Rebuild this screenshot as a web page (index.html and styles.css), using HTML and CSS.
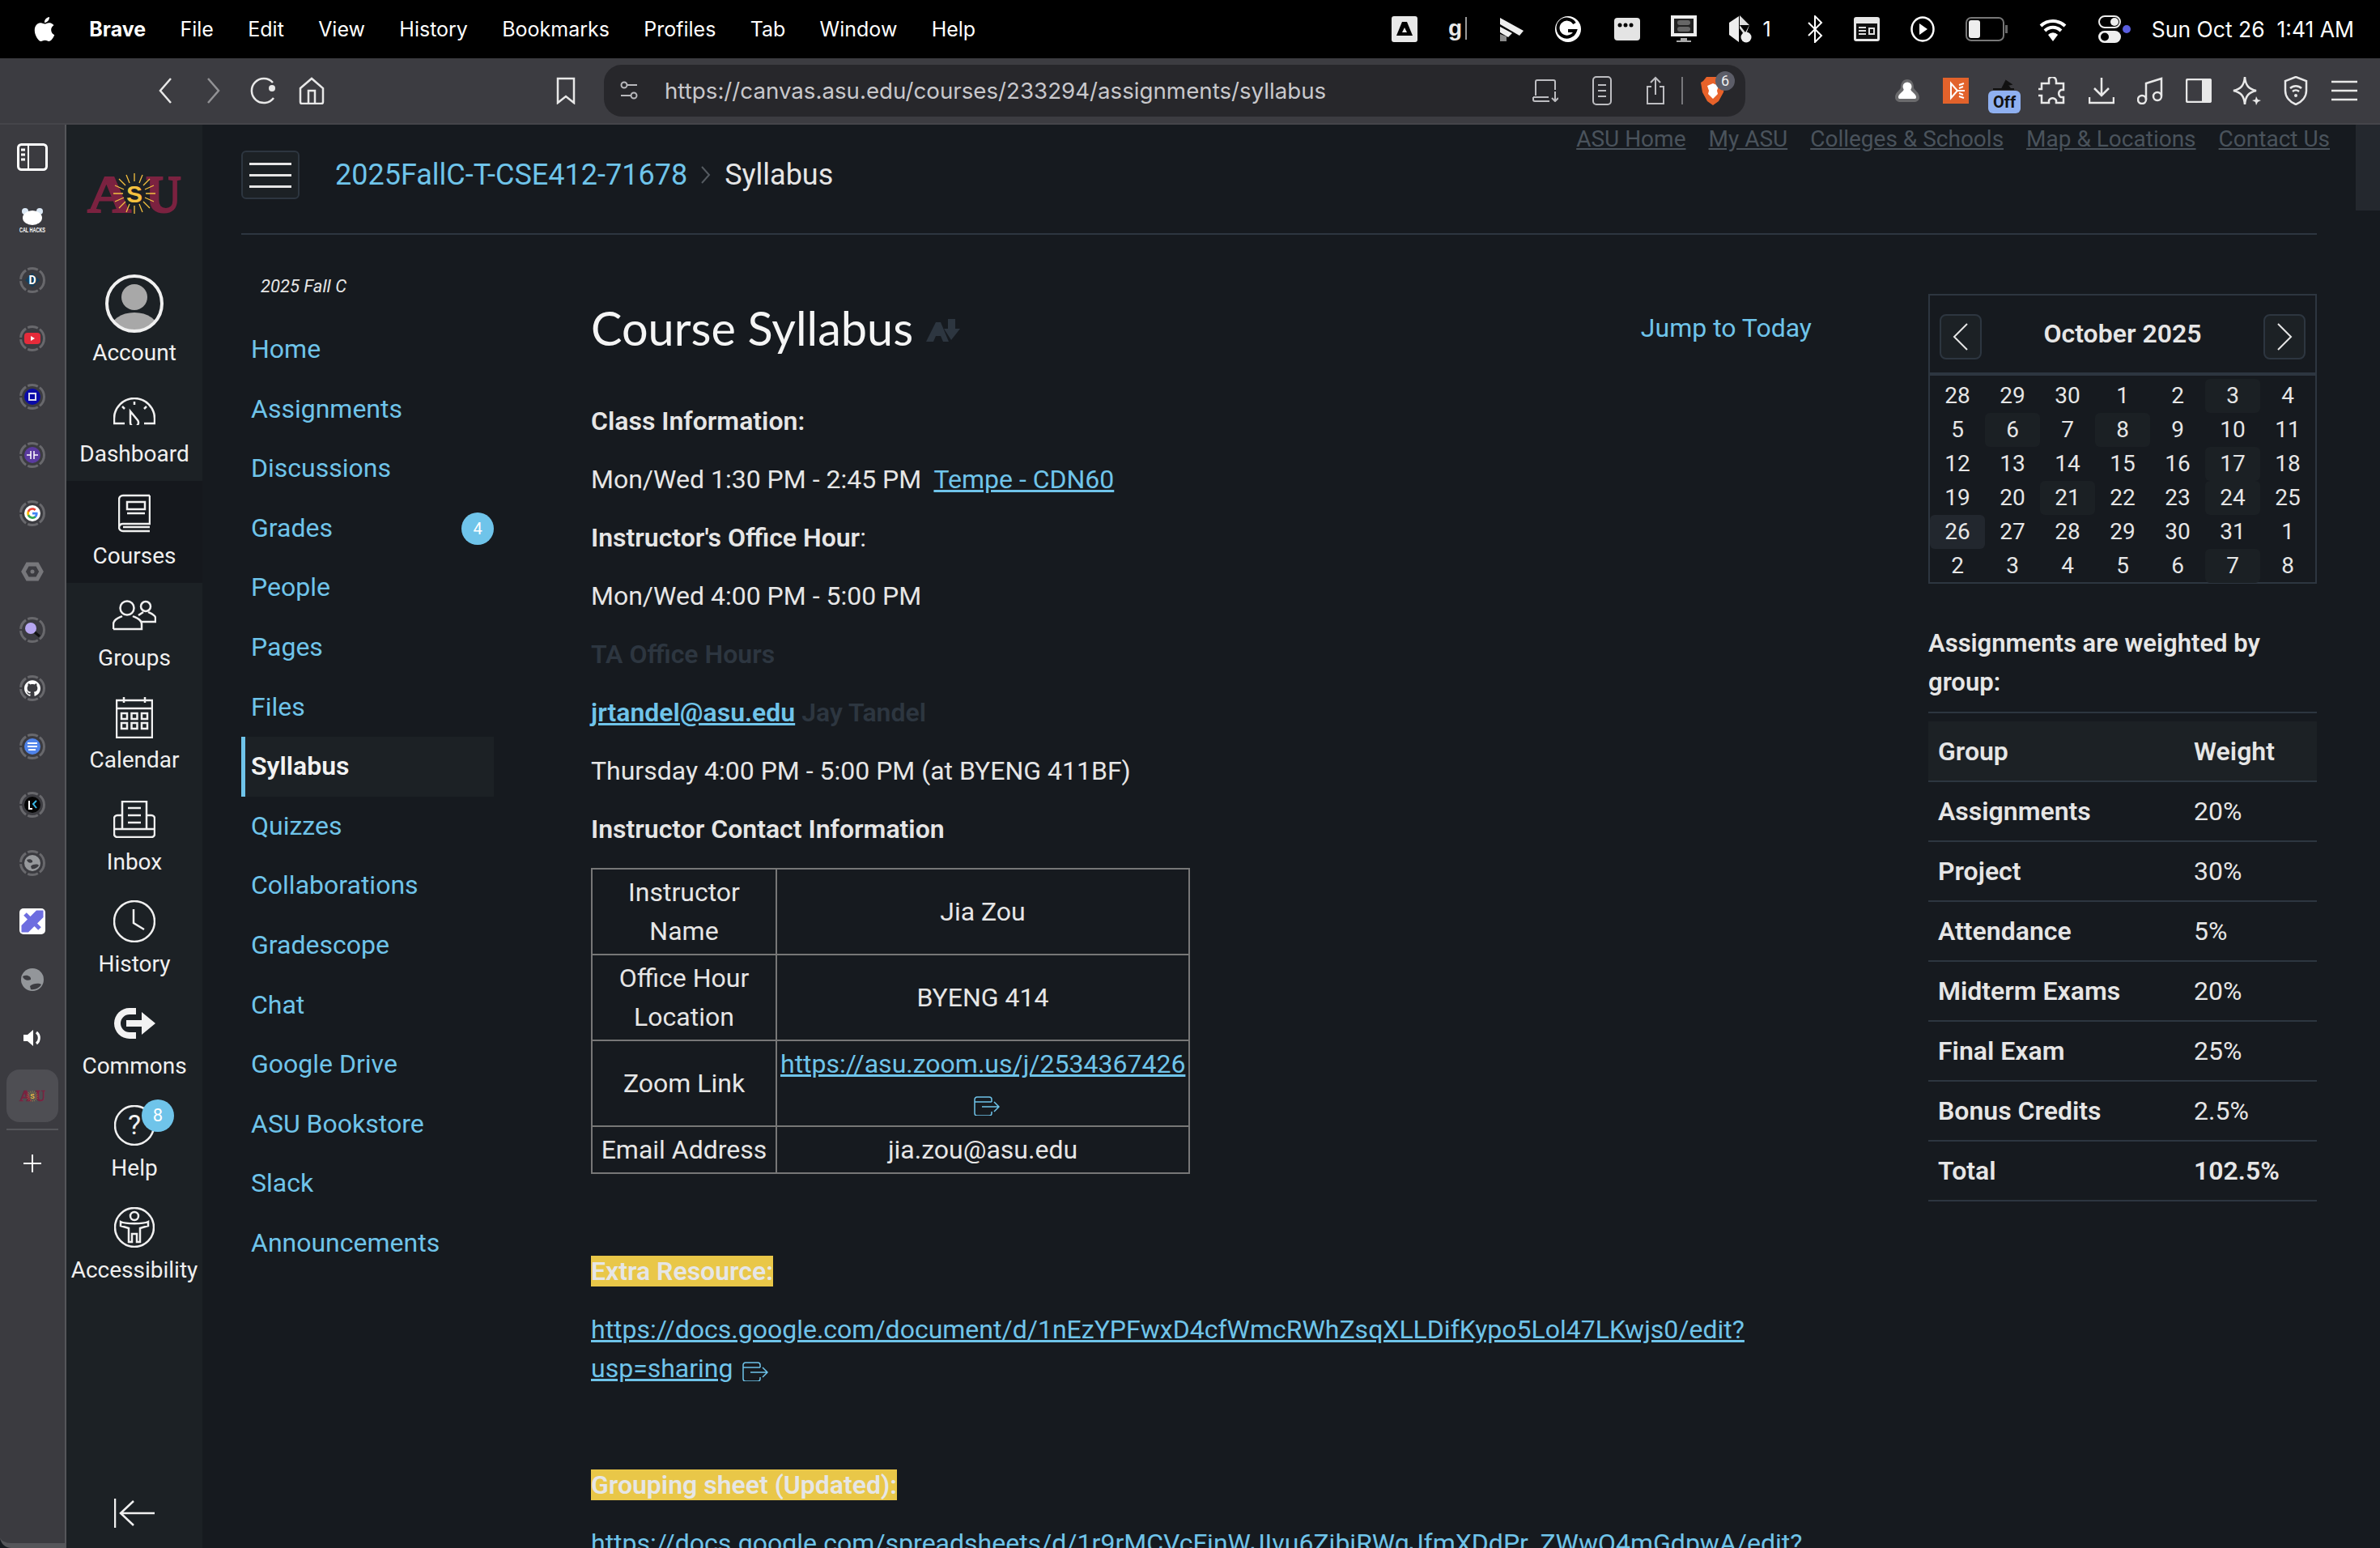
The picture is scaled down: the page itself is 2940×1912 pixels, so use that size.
FILE: index.html
```html
<!DOCTYPE html>
<html lang="en">
<head>
    <meta charset="UTF-8">
    <meta name="viewport" content="width=device-width, initial-scale=1.0">
    <title>Course Syllabus</title>
    <link rel="stylesheet" href="styles.css">
</head>
<body>
    <svg class="defs" width="0" height="0">
        <symbol id="ring" viewBox="0 0 32 32"><circle cx="16" cy="16" r="14.5" fill="none" stroke="#68686c" stroke-width="3" stroke-dasharray="13 2.5"/></symbol>
        <symbol id="ext" viewBox="0 0 32 24"><path d="M22 7V4a3 3 0 0 0-3-3H4a3 3 0 0 0-3 3v17a3 3 0 0 0 3 3h15a3 3 0 0 0 3-3v-2M1 7h21M10 13h21M25 7l6 6-6 6" fill="none" stroke="currentColor" stroke-width="1.500"/></symbol>
        <symbol id="sunrays" viewBox="0 0 116 50">
            <path d="M58 0v10M58 40v10M32 25h12M72 25h12M39 7l8 8M69 35l8 8M39 43l8-8M69 15l8-8M48 2l4 10M64 38l4 10M48 48l4-10M64 12l4-10M34 15l11 5M71 30l11 5M34 35l11-5M71 20l11-5" stroke="#f5c13f" stroke-width="1.300"/>
        </symbol>
    </svg>

    <header class="menubar">
        <div class="menu-left">
            <svg class="apple" width="30" height="34" viewBox="0 0 24 24" fill="#fff"><path d="M12.152 6.896c-.948 0-2.415-1.078-3.96-1.04-2.04.027-3.91 1.183-4.961 3.014-2.117 3.675-.546 9.103 1.519 12.09 1.013 1.454 2.208 3.09 3.792 3.039 1.52-.065 2.09-.987 3.935-.987 1.831 0 2.35.987 3.96.948 1.637-.026 2.676-1.48 3.676-2.948 1.156-1.688 1.636-3.325 1.662-3.415-.039-.013-3.182-1.221-3.22-4.857-.026-3.04 2.48-4.494 2.597-4.559-1.429-2.09-3.623-2.324-4.39-2.376-2-.156-3.675 1.09-4.61 1.09zM15.53 3.83c.843-1.012 1.4-2.427 1.245-3.83-1.207.052-2.662.805-3.532 1.818-.78.896-1.454 2.338-1.273 3.714 1.338.104 2.715-.688 3.559-1.701"/></svg>
            <b>Brave</b>
            <span>File</span>
            <span>Edit</span>
            <span>View</span>
            <span>History</span>
            <span>Bookmarks</span>
            <span>Profiles</span>
            <span>Tab</span>
            <span>Window</span>
            <span>Help</span>
        </div>
        <div class="menu-right">
            <svg width="32" height="32" viewBox="0 0 32 32"><rect width="32" height="32" rx="3" fill="#e8e8e8"/><path d="M13 7h6l7 17H6z" fill="#000"/><path d="M16 14l3 6h-6z" fill="#e8e8e8"/></svg>
            <svg width="24" height="32" viewBox="0 0 24 32"><text x="0" y="24" class="menu-g">g</text><path d="M22 1v28" stroke="#999" stroke-width="2"/></svg>
            <svg width="32" height="32" viewBox="0 0 32 32"><path d="M2 2l29 16-5 6L2 10z" fill="#eee"/><path d="M2 13l15 8-5 5-10-6z" fill="#eee"/><path d="M2 22l8 3v6H2z" fill="#8a8a8a"/></svg>
            <svg class="menu-wide" width="32" height="32" viewBox="0 0 32 32"><circle cx="16" cy="16" r="16" fill="#fff"/><path d="M24 9a11 11 0 1 0 1 9h-9" fill="none" stroke="#000" stroke-width="4"/></svg>
            <svg width="32" height="28" viewBox="0 0 32 28"><rect width="32" height="28" rx="4" fill="#e4e4e4"/><circle cx="7" cy="9" r="2.5"/><circle cx="14" cy="9" r="2.5"/><circle cx="21" cy="9" r="2.5"/></svg>
            <svg width="32" height="34" viewBox="0 0 32 34"><rect width="32" height="26" fill="#eee"/><rect x="4" y="4" width="24" height="18" fill="#222"/><rect x="8" y="6" width="16" height="6" rx="3" fill="#666"/><rect x="8" y="14" width="16" height="6" rx="3" fill="#666"/><path d="M12 28h8v3h5v2H7v-2h5z" fill="#aaa"/></svg>
            <svg width="30" height="34" viewBox="0 0 30 34"><path d="M15 0l12 12-5 14-7-10z" fill="#ddd"/><path d="M2 9l12-8v32L2 24z" fill="#eee"/><path d="M15 12h12l-5 9z" fill="#000"/><circle cx="23" cy="27" r="6.5" fill="#eee"/></svg>
            <span class="menu-count">1</span>
            <svg class="bt" width="20" height="34" viewBox="0 0 20 34"><path d="M2 9l16 16-8 8V1l8 8L2 25" fill="none" stroke="#fff" stroke-width="2"/></svg>
            <svg width="32" height="30" viewBox="0 0 32 30"><rect width="32" height="30" rx="3" fill="#e6e6e6"/><rect x="3" y="8" width="26" height="19" fill="#111"/><path d="M6 13h9M6 17h9M6 21h9M19 14h6v7h-6z" stroke="#ddd" stroke-width="2" fill="none"/></svg>
            <svg width="30" height="32" viewBox="0 0 30 32"><ellipse cx="15" cy="16" rx="13.5" ry="14.5" fill="none" stroke="#fff" stroke-width="2.5"/><path d="M11 9l10 7-10 7z" fill="#fff"/></svg>
            <svg width="52" height="30" viewBox="0 0 52 30"><rect x="1" y="1" width="46" height="28" rx="6" fill="none" stroke="#777" stroke-width="2"/><rect x="4" y="4" width="14" height="22" rx="3" fill="#eee"/><rect x="49" y="10" width="3" height="10" fill="#666"/></svg>
            <svg width="36" height="30" viewBox="0 0 36 30"><path d="M3 11a22 22 0 0 1 30 0M8 17a14 14 0 0 1 20 0" fill="none" stroke="#fff" stroke-width="4"/><path d="M18 30l-6-8a8 8 0 0 1 12 0z" fill="#fff"/></svg>
            <svg width="40" height="34" viewBox="0 0 40 34"><rect x="1" y="1" width="26" height="14" rx="7" fill="none" stroke="#eee" stroke-width="2"/><circle cx="20" cy="8" r="5" fill="#eee"/><rect y="19" width="28" height="15" rx="7.5" fill="#eee"/><circle cx="8" cy="26.500" r="5" fill="#000"/><circle cx="35" cy="17" r="5" fill="#5a5ee0"/></svg>
            <span class="menu-date">Sun Oct 26&nbsp; 1:41 AM</span>
        </div>
    </header>

    <div class="toolbar">
        <svg class="tb-back" width="18" height="34" viewBox="0 0 18 34"><path d="M16 2L3 17l13 15" class="ln"/></svg>
        <svg class="tb-fwd" width="18" height="34" viewBox="0 0 18 34"><path d="M2 2l13 15L2 32" class="ln"/></svg>
        <svg class="tb-reload" width="34" height="34" viewBox="0 0 34 34"><path d="M29 7a15 15 0 1 0 1 19" class="ln"/><circle cx="28" cy="14" r="4" fill="#e8e8e8"/></svg>
        <svg class="tb-home" width="32" height="34" viewBox="0 0 32 34"><path d="M2 14L16 2l14 12v17a2 2 0 0 1-2 2H4a2 2 0 0 1-2-2zM12 33V17h8v16" class="ln"/></svg>
        <svg class="tb-mark" width="24" height="34" viewBox="0 0 24 34"><path d="M2 2h20v30l-10-8-10 8z" class="ln"/></svg>
        <div class="urlbar">
            <svg width="24" height="24" viewBox="0 0 24 24"><path d="M10 5h12M2 18h12" stroke="#b8b8bc" stroke-width="2"/><circle cx="6" cy="5" r="3.500" fill="none" stroke="#b8b8bc" stroke-width="2"/><circle cx="18" cy="18" r="3.500" fill="none" stroke="#b8b8bc" stroke-width="2"/></svg>
            <span class="url-text">https://canvas.asu.edu/courses/233294/assignments/syllabus</span>
            <div class="url-tools">
                <svg width="32" height="28" viewBox="0 0 32 28"><path d="M4 20V3a2 2 0 0 1 2-2h20a2 2 0 0 1 2 2v10M1 22v3a2 2 0 0 0 2 2h18M1 22h19M28 15v12M24 23l4 4 4-4" fill="none" stroke="#bdbdc1" stroke-width="2"/></svg>
                <svg width="24" height="36" viewBox="0 0 24 36"><rect x="1" y="1" width="22" height="34" rx="4" fill="none" stroke="#bdbdc1" stroke-width="2"/><path d="M7 11h10M7 18h10M7 25h10" stroke="#bdbdc1" stroke-width="2"/></svg>
                <svg width="24" height="36" viewBox="0 0 24 36"><path d="M7 13H2v21h20V13h-5M12 23V2M6 8l6-6 6 6" fill="none" stroke="#bdbdc1" stroke-width="2"/></svg>
                <i class="url-sep"></i>
                <div class="brave-btn">
                    <svg width="30" height="36" viewBox="0 0 30 36"><path d="M7 1h16l4 5 3 2-2 12-6 11-7 5-7-5-6-11L0 8l3-2z" fill="#e8622a"/><path d="M8 12l7-3 7 3-2 6 1 4-6 6-6-6 1-4z" fill="#fff"/></svg>
                    <span class="brave-badge">6</span>
                </div>
            </div>
        </div>
        <div class="ext-tools">
            <span class="ext-slot"><svg width="32" height="30" viewBox="0 0 32 30"><path d="M16 1c5 0 8 4 8 10 0 3 7 6 7 12 0 4-3 6-7 6H8c-4 0-7-2-7-6 0-6 7-9 7-12C8 5 11 1 16 1z" fill="#6a6a6c"/><circle cx="16" cy="10" r="5.500" fill="#fff"/><path d="M12 12h8c0 5 7 6 7 11 0 2-1 2-3 2H8c-2 0-3 0-3-2 0-5 7-6 7-11z" fill="#fff"/></svg></span>
            <span class="ext-slot"><svg width="32" height="32" viewBox="0 0 32 32"><rect width="32" height="32" fill="#e2622b"/><path d="M10 7v18l8-9zM18 16h9M20 9l6-2M20 23l6 2M20 13l5-2M20 19l5 2" fill="none" stroke="#fff" stroke-width="2"/></svg></span>
            <span class="ext-slot ext-off"><svg width="28" height="14" viewBox="0 0 28 14"><path d="M0 12h26M12 10l4-8 6 4-4 1 2 3z" stroke="#111" stroke-width="2" fill="#111"/></svg><b>Off</b></span>
            <span class="ext-slot"><svg width="36" height="34" viewBox="0 0 36 34"><path d="M13 2a5 5 0 0 1 9 3v3h9v8h-3a5 5 0 0 0 0 9h3v7H22v-3a5 5 0 0 0-9 0v3H4v-9H1a4 4 0 0 1 0-8h3V8h9z" class="ln"/></svg></span>
            <span class="ext-slot"><svg width="32" height="34" viewBox="0 0 32 34"><path d="M16 1v22M7 14l9 9 9-9M1 25v7h30v-7" class="ln"/></svg></span>
            <span class="ext-slot"><svg width="32" height="34" viewBox="0 0 32 34"><path d="M11 28V8l19-6v21" class="ln"/><circle cx="6" cy="28" r="5" class="ln"/><circle cx="25" cy="24" r="5" class="ln"/></svg></span>
            <span class="ext-slot"><svg width="32" height="30" viewBox="0 0 32 30"><rect x="1" y="1" width="30" height="28" rx="2" class="ln"/><rect x="20" y="1" width="11" height="28" fill="#e8e8e8"/></svg></span>
            <span class="ext-slot"><svg width="36" height="36" viewBox="0 0 36 36"><path d="M15 1c1 11 5 15 14 17-9 2-13 6-14 17C14 24 10 20 1 18c9-2 13-6 14-17z" class="ln"/><path d="M29 25l2 4 4 1-4 2-2 4-1-4-4-2 4-1z" fill="#e8e8e8"/></svg></span>
            <span class="ext-slot"><svg width="30" height="36" viewBox="0 0 30 36"><path d="M15 1l13 5v12c0 8-6 14-13 17C8 32 2 26 2 18V6z" class="ln"/><path d="M8 15a10 10 0 0 1 14 0M11 19a6 6 0 0 1 8 0" class="ln"/><circle cx="15" cy="24" r="2" fill="#e8e8e8"/></svg></span>
            <span class="ext-slot"><svg width="32" height="26" viewBox="0 0 32 26"><path d="M0 2h32M0 13h32M0 24h32" class="ln" stroke-width="3"/></svg></span>
        </div>
    </div>

    <div class="window">
        <aside class="tabs">
            <div class="tab tab-panel"><svg width="38" height="34" viewBox="0 0 38 34"><rect x="1.500" y="1.500" width="35" height="31" rx="4" fill="none" stroke="#fff" stroke-width="3"/><path d="M14 2v30" stroke="#fff" stroke-width="2"/><path d="M5 8h5M5 14h5M5 20h5" stroke="#fff" stroke-width="3"/></svg></div>
            <div class="tab"><svg width="36" height="36" viewBox="0 0 36 36"><circle cx="9" cy="5" r="4" fill="#dbe8f5"/><circle cx="27" cy="5" r="4" fill="#dbe8f5"/><ellipse cx="18" cy="13" rx="12" ry="9" fill="#fff"/><text x="2" y="31" class="calhacks" textLength="32" lengthAdjust="spacingAndGlyphs">CAL HACKS</text></svg></div>
            <div class="tab"><svg class="ring" width="32" height="32"><use href="#ring"/></svg><svg class="fav" width="20" height="20" viewBox="0 0 20 20"><path d="M10 1l9 9-9 9-9-9z" fill="#173f5a"/><text x="10" y="15" class="fav-d">D</text></svg></div>
            <div class="tab"><svg class="ring" width="32" height="32"><use href="#ring"/></svg><svg class="fav" width="20" height="14" viewBox="0 0 20 14"><rect width="20" height="14" rx="4" fill="#e62b3a"/><path d="M8 4l5 3-5 3z" fill="#fff"/></svg></div>
            <div class="tab"><svg class="ring" width="32" height="32"><use href="#ring"/></svg><svg class="fav" width="20" height="20" viewBox="0 0 20 20"><circle cx="10" cy="10" r="10" fill="#0a0aa8"/><rect x="6" y="6" width="8" height="8" fill="none" stroke="#dde" stroke-width="2"/></svg></div>
            <div class="tab"><svg class="ring" width="32" height="32"><use href="#ring"/></svg><svg class="fav" width="20" height="20" viewBox="0 0 20 20"><circle cx="10" cy="10" r="10" fill="#5a3aa0"/><path d="M3 10h5M12 10h5M8 5v10M12 5v10" stroke="#fff" stroke-width="1.500"/></svg></div>
            <div class="tab"><svg class="ring" width="32" height="32"><use href="#ring"/></svg><svg class="fav" width="20" height="20" viewBox="0 0 24 24"><circle cx="12" cy="12" r="12" fill="#fff"/><g transform="translate(3 3) scale(.75)"><path d="M22.560 12.250c0-.78-.07-1.530-.2-2.250H12v4.260h5.920c-.26 1.370-1.040 2.530-2.210 3.310v2.770h3.570c2.080-1.920 3.280-4.740 3.280-8.090z" fill="#4285f4"/><path d="M12 23c2.970 0 5.460-.98 7.280-2.660l-3.570-2.770c-.98.66-2.230 1.060-3.710 1.060-2.860 0-5.290-1.930-6.160-4.530H2.180v2.840C3.990 20.530 7.700 23 12 23z" fill="#34a853"/><path d="M5.840 14.090c-.22-.66-.35-1.360-.35-2.090s.13-1.430.35-2.090V7.070H2.180C1.430 8.550 1 10.220 1 12s.43 3.450 1.180 4.930z" fill="#fbbc05"/><path d="M12 5.380c1.620 0 3.060.56 4.210 1.640l3.150-3.150C17.450 2.090 14.970 1 12 1 7.700 1 3.990 3.470 2.180 7.070l3.660 2.840c.87-2.600 3.300-4.530 6.160-4.530z" fill="#ea4335"/></g></svg></div>
            <div class="tab"><svg width="28" height="24" viewBox="0 0 28 24"><path d="M8 3h12l5 9-5 9H8l-5-9z" fill="none" stroke="#77777b" stroke-width="5"/><circle cx="14" cy="12" r="2.500" fill="#77777b"/></svg></div>
            <div class="tab"><svg class="ring" width="32" height="32"><use href="#ring"/></svg><svg class="fav" width="20" height="20" viewBox="0 0 20 20"><circle cx="8" cy="8" r="7" fill="#b6a6f0"/><path d="M13 13l6 5" stroke="#111" stroke-width="3"/></svg></div>
            <div class="tab"><svg class="ring" width="32" height="32"><use href="#ring"/></svg><svg class="fav" width="20" height="20" viewBox="0 0 24 24" fill="#fff"><path d="M12 .297c-6.630 0-12 5.373-12 12 0 5.303 3.438 9.800 8.205 11.385.6.113.82-.258.82-.577 0-.285-.01-1.040-.015-2.040-3.338.724-4.042-1.610-4.042-1.610C4.422 18.070 3.633 17.700 3.633 17.700c-1.087-.744.084-.729.084-.729 1.205.084 1.838 1.236 1.838 1.236 1.070 1.835 2.809 1.305 3.495.998.108-.776.417-1.305.76-1.605-2.665-.3-5.466-1.332-5.466-5.930 0-1.310.465-2.380 1.235-3.220-.135-.303-.54-1.523.105-3.176 0 0 1.005-.322 3.300 1.230.96-.267 1.980-.399 3-.405 1.020.006 2.040.138 3 .405 2.280-1.552 3.285-1.230 3.285-1.230.645 1.653.24 2.873.12 3.176.765.84 1.230 1.910 1.230 3.220 0 4.610-2.805 5.625-5.475 5.920.42.36.81 1.096.81 2.220 0 1.606-.015 2.896-.015 3.286 0 .315.21.69.825.57C20.565 22.092 24 17.592 24 12.297c0-6.627-5.373-12-12-12"/></svg></div>
            <div class="tab"><svg class="ring" width="32" height="32"><use href="#ring"/></svg><svg class="fav" width="20" height="20" viewBox="0 0 20 20"><circle cx="10" cy="10" r="10" fill="#4f83ea"/><path d="M4 6h12M4 10h12M5 14h9" stroke="#fff" stroke-width="2"/></svg></div>
            <div class="tab"><svg class="ring" width="32" height="32"><use href="#ring"/></svg><svg class="fav" width="20" height="20" viewBox="0 0 20 20"><circle cx="10" cy="10" r="10" fill="#050505"/><path d="M6 5v10h4" fill="none" stroke="#fff" stroke-width="2"/><path d="M15 5l-4 4 4 5" fill="none" stroke="#39b8e8" stroke-width="2"/></svg></div>
            <div class="tab"><svg class="ring" width="32" height="32"><use href="#ring"/></svg><svg class="fav" width="20" height="20" viewBox="0 0 20 20"><circle cx="10" cy="10" r="10" fill="#97999c"/><path d="M3 6c4-2 8 0 7 3-3 2-6 0-7-3zM8 14c3-3 9-3 10-1-2 3-6 5-9 4z" fill="#3c3c41"/></svg></div>
            <div class="tab"><svg width="32" height="32" viewBox="0 0 32 32"><rect width="32" height="32" rx="5" fill="#fff"/><path d="M7 7l18 18M22 5l5 0 0 5L10 27l-5 0 0-5z" stroke="#6d6de0" stroke-width="5" fill="#6d6de0"/></svg></div>
            <div class="tab"><svg width="28" height="28" viewBox="0 0 28 28"><circle cx="14" cy="14" r="14" fill="#93969a"/><path d="M2 10c5-3 11 0 10 4-4 2-9 0-10-4zM11 22c4-4 12-4 14-2-2 4-8 7-13 6z" fill="#3c3c41"/></svg></div>
            <div class="tab"><svg width="24" height="22" viewBox="0 0 24 22"><path d="M1 7h5l7-6v20l-7-6H1z" fill="#fff"/><path d="M17 4a9 9 0 0 1 0 14" fill="none" stroke="#fff" stroke-width="3"/></svg></div>
            <div class="tab tab-active"><svg width="32" height="14" viewBox="0 0 116 50"><text x="0" y="48" class="asu-letter" textLength="54" lengthAdjust="spacingAndGlyphs">A</text><text x="72" y="48" class="asu-letter" textLength="44" lengthAdjust="spacingAndGlyphs">U</text><use href="#sunrays"/><text x="58" y="36" class="asu-s">S</text></svg></div>
            <i class="tabs-rule"></i>
            <div class="tab tab-add"><svg width="22" height="22" viewBox="0 0 22 22"><path d="M11 0v22M0 11h22" stroke="#fff" stroke-width="2"/></svg></div>
        </aside>

        <nav class="globalnav">
            <div class="gn-logo"><svg width="116" height="50" viewBox="0 0 116 50"><text x="0" y="48" class="asu-letter" textLength="54" lengthAdjust="spacingAndGlyphs">A</text><text x="72" y="48" class="asu-letter" textLength="44" lengthAdjust="spacingAndGlyphs">U</text><use href="#sunrays"/><text x="58" y="36" class="asu-s">S</text></svg></div>
            <div class="gn-item gn-account">
                <div class="gn-icon"><svg width="72" height="72" viewBox="0 0 72 72"><defs><clipPath id="avatar"><circle cx="36" cy="36" r="33"/></clipPath></defs><g clip-path="url(#avatar)" fill="#a8a8a8"><circle cx="36" cy="28" r="16"/><ellipse cx="36" cy="68" rx="30" ry="21"/></g><circle cx="36" cy="36" r="34" fill="none" stroke="#f0f0f0" stroke-width="4"/></svg></div>
                <span>Account</span>
            </div>
            <div class="gn-item">
                <div class="gn-icon"><svg width="52" height="34" viewBox="0 0 52 34"><path d="M14 32H1v-6a25 25 0 0 1 50 0v6H38M26 5v4M11 11l3 3M41 11l-3 3M21 17l9 11a5 5 0 1 1-9 3z" class="nav-ln"/></svg></div>
                <span>Dashboard</span>
            </div>
            <div class="gn-item gn-active">
                <div class="gn-icon"><svg width="40" height="48" viewBox="0 0 40 48"><path d="M39 2H6a5 5 0 0 0-5 5v34a5 5 0 0 0 5 5h33M39 2v35H6a5 5 0 0 0-5 4M6 41h33" class="nav-ln"/><path d="M11 10h22v9H11zM11 24h22" class="nav-ln"/></svg></div>
                <span>Courses</span>
            </div>
            <div class="gn-item">
                <div class="gn-icon"><svg width="54" height="38" viewBox="0 0 54 38"><circle cx="18" cy="10" r="8.500" class="nav-ln"/><path d="M1 36v-6c0-6 7-8 11-10M25 20c4 2 11 4 11 10v6H1" class="nav-ln"/><circle cx="41" cy="8" r="6" class="nav-ln"/><path d="M36 27h17v-5c0-3-5-5-9-7M38 15l-6 4" class="nav-ln"/></svg></div>
                <span>Groups</span>
            </div>
            <div class="gn-item">
                <div class="gn-icon"><svg width="46" height="52" viewBox="0 0 46 52"><path d="M1 5h44v46H1zM1 15h44M10 1v7M36 1v7" class="nav-ln"/><path d="M7 21h7v7H7zM19.500 21h7v7h-7zM32 21h7v7h-7zM7 33h7v7H7zM19.500 33h7v7h-7zM32 33h7v7h-7z" class="nav-ln"/></svg></div>
                <span>Calendar</span>
            </div>
            <div class="gn-item">
                <div class="gn-icon"><svg width="52" height="46" viewBox="0 0 52 46"><path d="M11 18H5a4 4 0 0 0-4 4v19a4 4 0 0 0 4 4h42a4 4 0 0 0 4-4V22a4 4 0 0 0-4-4h-6M1 35h50M11 35V1h30v34" class="nav-ln"/><path d="M18 9h16M18 18h16M18 27h16" class="nav-ln"/></svg></div>
                <span>Inbox</span>
            </div>
            <div class="gn-item">
                <div class="gn-icon"><svg width="52" height="52" viewBox="0 0 52 52"><circle cx="26" cy="26" r="25" class="nav-ln"/><path d="M25 11v17l13 8" class="nav-ln"/></svg></div>
                <span>History</span>
            </div>
            <div class="gn-item">
                <div class="gn-icon"><svg width="52" height="40" viewBox="0 0 52 40"><path d="M28 1H20a19 19 0 0 0 0 38h8v-8H20a11 11 0 0 1 0-22h8z" fill="#f2f2f2"/><path d="M16 16h19V6l17 14-17 14V24H16z" fill="#f2f2f2"/></svg></div>
                <span>Commons</span>
            </div>
            <div class="gn-item gn-help">
                <div class="gn-icon">
                    <svg width="50" height="50" viewBox="0 0 50 50"><circle cx="25" cy="25" r="24" class="nav-ln"/><text x="25" y="36" class="help-mark">?</text></svg>
                    <span class="gn-badge">8</span>
                </div>
                <span>Help</span>
            </div>
            <div class="gn-item">
                <div class="gn-icon"><svg width="50" height="50" viewBox="0 0 50 50"><circle cx="25" cy="25" r="24" class="nav-ln"/><circle cx="25" cy="11" r="5" class="nav-ln"/><path d="M8 18c6 3 28 3 34 0v5l-10 3v17h-4V33h-6v10h-4V26L8 23z" class="nav-ln"/></svg></div>
                <span>Accessibility</span>
            </div>
            <div class="gn-collapse"><svg width="50" height="36" viewBox="0 0 50 36"><path d="M1 0v36M50 18H8M24 3L8 18l16 15" class="nav-ln"/></svg></div>
        </nav>

        <div class="page">
            <i class="scroll-thumb"></i>
            <div class="top-links">
                <a>ASU Home</a>
                <a>My ASU</a>
                <a>Colleges &amp; Schools</a>
                <a>Map &amp; Locations</a>
                <a>Contact Us</a>
            </div>
            <div class="crumbs">
                <button class="burger"><i></i><i></i><i></i></button>
                <a class="crumb-link">2025FallC-T-CSE412-71678</a>
                <svg width="14" height="22" viewBox="0 0 14 22"><path d="M2 1l9 10-9 10" fill="none" stroke="#555b61" stroke-width="2"/></svg>
                <span class="crumb-now">Syllabus</span>
            </div>

            <div class="columns">
                <div class="coursenav">
                    <div class="term">2025 Fall C</div>
                    <a>Home</a>
                    <a>Assignments</a>
                    <a>Discussions</a>
                    <a class="has-badge">Grades<span class="nav-badge">4</span></a>
                    <a>People</a>
                    <a>Pages</a>
                    <a>Files</a>
                    <a class="current">Syllabus</a>
                    <a>Quizzes</a>
                    <a>Collaborations</a>
                    <a>Gradescope</a>
                    <a>Chat</a>
                    <a>Google Drive</a>
                    <a>ASU Bookstore</a>
                    <a>Slack</a>
                    <a>Announcements</a>
                </div>

                <main class="content">
                    <div class="title-row">
                        <h1>Course Syllabus</h1>
                        <svg class="title-icon" width="42" height="28" viewBox="0 0 42 28"><path d="M0 28L12 4h6l10 24h-7l-3-7h-6l-3 7z" fill="#2d3640"/><path d="M27 0h9v12h6L31 26 22 12h5z" fill="#2d3640"/></svg>
                        <a class="jump">Jump to Today</a>
                    </div>
                    <p><strong>Class Information:</strong></p>
                    <p>Mon/Wed 1:30 PM - 2:45 PM&nbsp; <a class="link">Tempe - CDN60</a></p>
                    <p><strong>Instructor's Office Hour</strong>:</p>
                    <p>Mon/Wed 4:00 PM - 5:00 PM</p>
                    <p><strong class="dim">TA Office Hours</strong></p>
                    <p><strong><a class="link">jrtandel@asu.edu</a></strong> <strong class="dim">Jay Tandel</strong></p>
                    <p>Thursday 4:00 PM - 5:00 PM (at BYENG 411BF)</p>
                    <p><strong>Instructor Contact Information</strong></p>
                    <table class="contact">
                        <tr><td class="c1">Instructor Name</td><td>Jia Zou</td></tr>
                        <tr><td class="c1">Office Hour Location</td><td>BYENG 414</td></tr>
                        <tr><td class="c1">Zoom Link</td><td><a class="link">https://asu.zoom.us/j/2534367426</a> <svg class="ext" width="32" height="24"><use href="#ext"/></svg></td></tr>
                        <tr><td class="c1">Email Address</td><td>jia.zou@asu.edu</td></tr>
                    </table>
                    <p>&nbsp;</p>
                    <p><strong class="mark">Extra Resource:</strong></p>
                    <p><a class="link">https://docs.google.com/document/d/1nEzYPFwxD4cfWmcRWhZsqXLLDifKypo5Lol47LKwjs0/edit?usp=sharing</a> <svg class="ext" width="32" height="24"><use href="#ext"/></svg></p>
                    <p>&nbsp;</p>
                    <p><strong class="mark">Grouping sheet (Updated):</strong></p>
                    <p><a class="link">https://docs.google.com/spreadsheets/d/1r9rMCVcFinWJIvu6ZibiRWqJfmXDdPr_ZWwQ4mGdpwA/edit?usp=sharing</a></p>
                </main>

                <aside class="side">
                    <div class="calendar">
                        <div class="cal-head">
                            <button class="cal-btn"><svg width="20" height="34" viewBox="0 0 20 34"><path d="M18 1L2 17l16 16" fill="none" stroke="#e6e6e6" stroke-width="2"/></svg></button>
                            <span class="cal-title">October 2025</span>
                            <button class="cal-btn"><svg width="20" height="34" viewBox="0 0 20 34"><path d="M2 1l16 16L2 33" fill="none" stroke="#e6e6e6" stroke-width="2"/></svg></button>
                        </div>
                        <div class="cal-grid">
                            <span>28</span><span>29</span><span>30</span><span>1</span><span>2</span><span class="ev">3</span><span>4</span>
                            <span>5</span><span class="ev">6</span><span>7</span><span class="ev">8</span><span>9</span><span>10</span><span>11</span>
                            <span>12</span><span>13</span><span>14</span><span>15</span><span>16</span><span class="ev">17</span><span>18</span>
                            <span>19</span><span>20</span><span class="ev">21</span><span>22</span><span>23</span><span class="ev">24</span><span>25</span>
                            <span class="today">26</span><span>27</span><span>28</span><span>29</span><span>30</span><span>31</span><span>1</span>
                            <span>2</span><span>3</span><span>4</span><span>5</span><span>6</span><span class="ev">7</span><span>8</span>
                        </div>
                    </div>
                    <h2 class="weights-title">Assignments are weighted by group:</h2>
                    <table class="weights">
                        <tr class="w-head"><th>Group</th><th>Weight</th></tr>
                        <tr><th>Assignments</th><td>20%</td></tr>
                        <tr><th>Project</th><td>30%</td></tr>
                        <tr><th>Attendance</th><td>5%</td></tr>
                        <tr><th>Midterm Exams</th><td>20%</td></tr>
                        <tr><th>Final Exam</th><td>25%</td></tr>
                        <tr><th>Bonus Credits</th><td>2.5%</td></tr>
                        <tr><th>Total</th><th>102.5%</th></tr>
                    </table>
                </aside>
            </div>
        </div>
    </div>
</body>
</html>
```
FILE: styles.css
```css
* {
    box-sizing: border-box;
}

html, body {
    height: 100%;
}

body {
    margin: 0;
    height: 1912px;
    overflow: hidden;
    background: #161a1f;
    color: #e6e6e6;
    font-family: Roboto, "Liberation Sans", sans-serif;
    font-size: 32px;
    line-height: 48px;
}

.defs {
    position: absolute;
}

.ln {
    fill: none;
    stroke: #e8e8e8;
    stroke-width: 2.5;
}

.nav-ln {
    fill: none;
    stroke: #f0f0f0;
    stroke-width: 2.5;
}

/* mac menu bar */
.menubar {
    height: 72px;
    background: #000;
    color: #fff;
    display: flex;
    justify-content: space-between;
    align-items: center;
    padding: 0 32px 0 40px;
    font-family: Inter, sans-serif;
    font-size: 25px;
    line-height: 30px;
}

.menu-left {
    display: flex;
    align-items: center;
    gap: 42.3px;
}

.menu-left .apple {
    margin-right: -2px;
}

.menu-right {
    display: flex;
    align-items: center;
    gap: 38px;
}

.menu-wide {
    margin-right: 3px;
}

.menu-g {
    font-size: 28px;
    font-weight: 700;
    fill: #e8e8e8;
    font-family: "Liberation Sans", sans-serif;
}

.menu-count {
    margin-left: -24px;
    margin-right: 6px;
}

.menu-date {
    margin-left: -12px;
    font-size: 26.5px;
}

/* browser toolbar */
.toolbar {
    height: 82px;
    background: #3c3c41;
    border-bottom: 2px solid #45454a;
    display: flex;
    align-items: center;
    padding-left: 195px;
}

.tb-fwd {
    margin-left: 42px;
    opacity: .5;
}

.tb-reload {
    margin-left: 35px;
}

.tb-home {
    margin-left: 27px;
}

.tb-mark {
    margin-left: 286px;
}

.urlbar {
    margin-left: 35px;
    width: 1410px;
    height: 64px;
    background: #27272b;
    border-radius: 22px;
    display: flex;
    align-items: center;
    padding: 0 25px 0 19px;
}

.url-text {
    margin-left: 32px;
    color: #c8c8cc;
    font-family: Inter, sans-serif;
    font-size: 27.7px;
}

.url-tools {
    margin-left: auto;
    display: flex;
    align-items: center;
    gap: 42px;
}

.url-sep {
    width: 2px;
    height: 34px;
    background: #77777b;
    margin: 0 -20px 0 -22px;
}

.brave-btn {
    position: relative;
    display: flex;
}

.brave-badge {
    position: absolute;
    top: -6px;
    right: -12px;
    width: 24px;
    height: 24px;
    border-radius: 50%;
    background: #5c5d68;
    color: #eee;
    font-size: 18px;
    line-height: 24px;
    text-align: center;
}

.ext-tools {
    margin-left: auto;
    margin-right: 14px;
    display: flex;
}

.ext-slot {
    width: 60px;
    height: 64px;
    display: flex;
    flex-direction: column;
    align-items: center;
    justify-content: center;
}

.ext-off {
    padding-top: 14px;
}

.ext-off b {
    width: 40px;
    height: 28px;
    background: #8fb0f0;
    border-radius: 6px;
    color: #111;
    font-size: 20px;
    line-height: 28px;
    text-align: center;
}

/* main window */
.window {
    display: flex;
    height: 1758px;
}

.tabs {
    width: 82px;
    flex-shrink: 0;
    background: #3b3b40;
    border-right: 2px solid #55565a;
    border-bottom: 6px solid #55565a;
    border-bottom-left-radius: 14px;
    padding-top: 4px;
    display: flex;
    flex-direction: column;
    align-items: center;
}

.tab {
    position: relative;
    width: 64px;
    height: 72px;
    flex-shrink: 0;
    display: flex;
    align-items: center;
    justify-content: center;
}

.tab svg {
    overflow: visible;
}

.tab-panel {
    margin-bottom: 8px;
}

.tab .fav {
    position: absolute;
    left: 50%;
    top: 50%;
    transform: translate(-50%, -50%);
}

.tab-active {
    height: 65px;
    margin-top: 3px;
    background: #4e4e53;
    border-radius: 16px;
}

.tabs-rule {
    width: 64px;
    height: 2px;
    background: #55565a;
    margin-top: 8px;
}

.tab-add {
    margin-top: 5px;
}

.calhacks {
    font-size: 9px;
    font-weight: 700;
    fill: #fff;
    font-family: "Liberation Sans", sans-serif;
}

.fav-d {
    font-size: 14px;
    font-weight: 700;
    fill: #fff;
    text-anchor: middle;
}

.asu-letter {
    font-family: "Liberation Serif", serif;
    font-size: 66px;
    font-weight: 700;
    fill: #7b2240;
    stroke: #7b2240;
    stroke-width: 2;
}

.asu-s {
    font-family: "Liberation Sans", sans-serif;
    font-size: 30px;
    font-weight: 700;
    fill: #f5c13f;
    text-anchor: middle;
}

/* canvas global nav */
.globalnav {
    width: 168px;
    flex-shrink: 0;
    background: #1c2125;
    color: #f0f0f0;
    position: relative;
    font-size: 28px;
    line-height: 40px;
}

.gn-logo {
    height: 188px;
    padding-top: 60px;
    display: flex;
    justify-content: center;
}

.gn-logo svg {
    overflow: visible;
}

.gn-item {
    height: 126px;
    padding-top: 14px;
    display: flex;
    flex-direction: column;
    align-items: center;
}

.gn-icon {
    position: relative;
    height: 52px;
    margin-bottom: 7px;
    display: flex;
    align-items: center;
    justify-content: center;
}

.gn-account .gn-icon {
    margin-top: -7px;
    margin-bottom: 15px;
}

.gn-active {
    background: #15181d;
}

.help-mark {
    font-size: 34px;
    fill: #f0f0f0;
    text-anchor: middle;
}

.gn-badge {
    position: absolute;
    left: 34px;
    top: -6px;
    width: 40px;
    height: 40px;
    border-radius: 50%;
    background: #6fc4ea;
    color: #fff;
    font-size: 22px;
    line-height: 40px;
    text-align: center;
}

.gn-collapse {
    position: absolute;
    left: 59px;
    top: 1697px;
    display: flex;
}

/* page */
.page {
    flex: 1;
    position: relative;
    overflow: hidden;
    padding: 0 62px 0 48px;
}

.scroll-thumb {
    position: absolute;
    right: 0;
    top: 0;
    width: 30px;
    height: 106px;
    background: #24282e;
}

.top-links {
    height: 32px;
    margin-top: 2px;
    display: flex;
    justify-content: flex-end;
    gap: 28px;
    font-size: 28px;
    line-height: 32px;
}

.top-links a {
    color: #4a535c;
    text-decoration: underline;
}

.crumbs {
    height: 102px;
    margin-right: 16px;
    padding-bottom: 44px;
    border-bottom: 2px solid #2d3640;
    display: flex;
    align-items: center;
}

.burger {
    width: 72px;
    height: 60px;
    margin-right: 44px;
    padding: 0 8px;
    background: #1c2125;
    border: 2px solid #2d3640;
    border-radius: 6px;
    display: flex;
    flex-direction: column;
    justify-content: center;
    gap: 11px;
}

.burger i {
    display: block;
    height: 3px;
    background: #e6e6e6;
}

.crumb-link {
    color: #6fc4ea;
    font-size: 36px;
}

.crumbs svg {
    margin: 0 16px;
}

.crumb-now {
    font-size: 36px;
}

.columns {
    display: flex;
}

.coursenav {
    width: 312px;
    flex-shrink: 0;
    padding-top: 44px;
}

.term {
    padding-left: 24px;
    margin-bottom: 21px;
    font-size: 22px;
    font-style: italic;
    line-height: 40px;
}

.coursenav a {
    display: block;
    height: 73.6px;
    padding-left: 12px;
    line-height: 73.6px;
    color: #6fc4ea;
}

.has-badge {
    position: relative;
}

.nav-badge {
    position: absolute;
    left: 272px;
    top: 17px;
    width: 40px;
    height: 40px;
    border-radius: 50%;
    background: #6fc4ea;
    color: #fff;
    font-size: 20px;
    line-height: 40px;
    text-align: center;
}

.coursenav .current {
    background: #1c2125;
    border-left: 5px solid #6fc4ea;
    padding-left: 7px;
    color: #f2f2f2;
    font-weight: 600;
}

.content {
    width: 1508px;
    margin-left: 120px;
    flex-shrink: 0;
    padding-top: 79px;
}

.title-row {
    height: 72px;
    margin-bottom: 55px;
    display: flex;
    align-items: center;
}

h1 {
    margin: 0 16px 0 0;
    font-family: Lato, sans-serif;
    font-size: 57.6px;
    font-weight: 400;
    line-height: 72px;
    color: #f5f5f5;
}

.title-icon {
    margin-top: 6px;
}

.jump {
    margin-left: auto;
    color: #6fc4ea;
}

p {
    margin: 0 0 24px;
}

strong {
    font-weight: 600;
}

.link {
    color: #6fc4ea;
    text-decoration: underline;
}

.dim {
    color: #2d3640;
}

.mark {
    background: #e9c748;
}

.ext {
    color: #6fc4ea;
    vertical-align: -5px;
    margin-left: 4px;
}

.contact {
    width: 740px;
    table-layout: fixed;
    border-collapse: collapse;
    margin-bottom: 24px;
}

.contact td {
    border: 2px solid #777;
    padding: 4px;
    text-align: center;
}

.contact .c1 {
    width: 228px;
}

.contact .ext {
    margin-left: 10px;
}

.side {
    width: 480px;
    margin-left: 144px;
    flex-shrink: 0;
    padding-top: 73px;
}

.calendar {
    height: 358px;
    border: 2px solid #2d3640;
}

.cal-head {
    height: 95px;
    padding: 0 12px;
    display: flex;
    align-items: center;
    justify-content: space-between;
}

.cal-btn {
    width: 52px;
    height: 56px;
    margin-top: 6px;
    padding: 0;
    background: #1c2125;
    border: 2px solid #2d3640;
    border-radius: 8px;
    display: flex;
    align-items: center;
    justify-content: center;
}

.cal-title {
    font-weight: 600;
    margin-top: -2px;
}

.cal-grid {
    border-top: 4px solid #2d3640;
    padding-top: 4px;
    display: grid;
    grid-template-columns: repeat(7, 1fr);
    grid-auto-rows: 42px;
    font-size: 28px;
    line-height: 42px;
    text-align: center;
}

.cal-grid .ev {
    background: #1b2024;
    border-radius: 6px;
}

.cal-grid .today {
    background: #22272e;
    border-radius: 6px;
}

.weights-title {
    margin: 50px 0 0;
    padding-bottom: 12px;
    border-bottom: 2px solid #2d3640;
    font-size: 31px;
    font-weight: 600;
    line-height: 48px;
}

.weights {
    width: 100%;
    margin-top: 10px;
    table-layout: fixed;
    border-collapse: collapse;
}

.weights tr {
    height: 74px;
    border-bottom: 2px solid #2d3640;
}

.weights th, .weights td {
    padding: 0 12px;
    text-align: left;
    font-weight: 400;
}

.weights th {
    font-weight: 600;
}

.weights th:first-child {
    width: 316px;
}

.w-head {
    background: #1c2125;
}
```
